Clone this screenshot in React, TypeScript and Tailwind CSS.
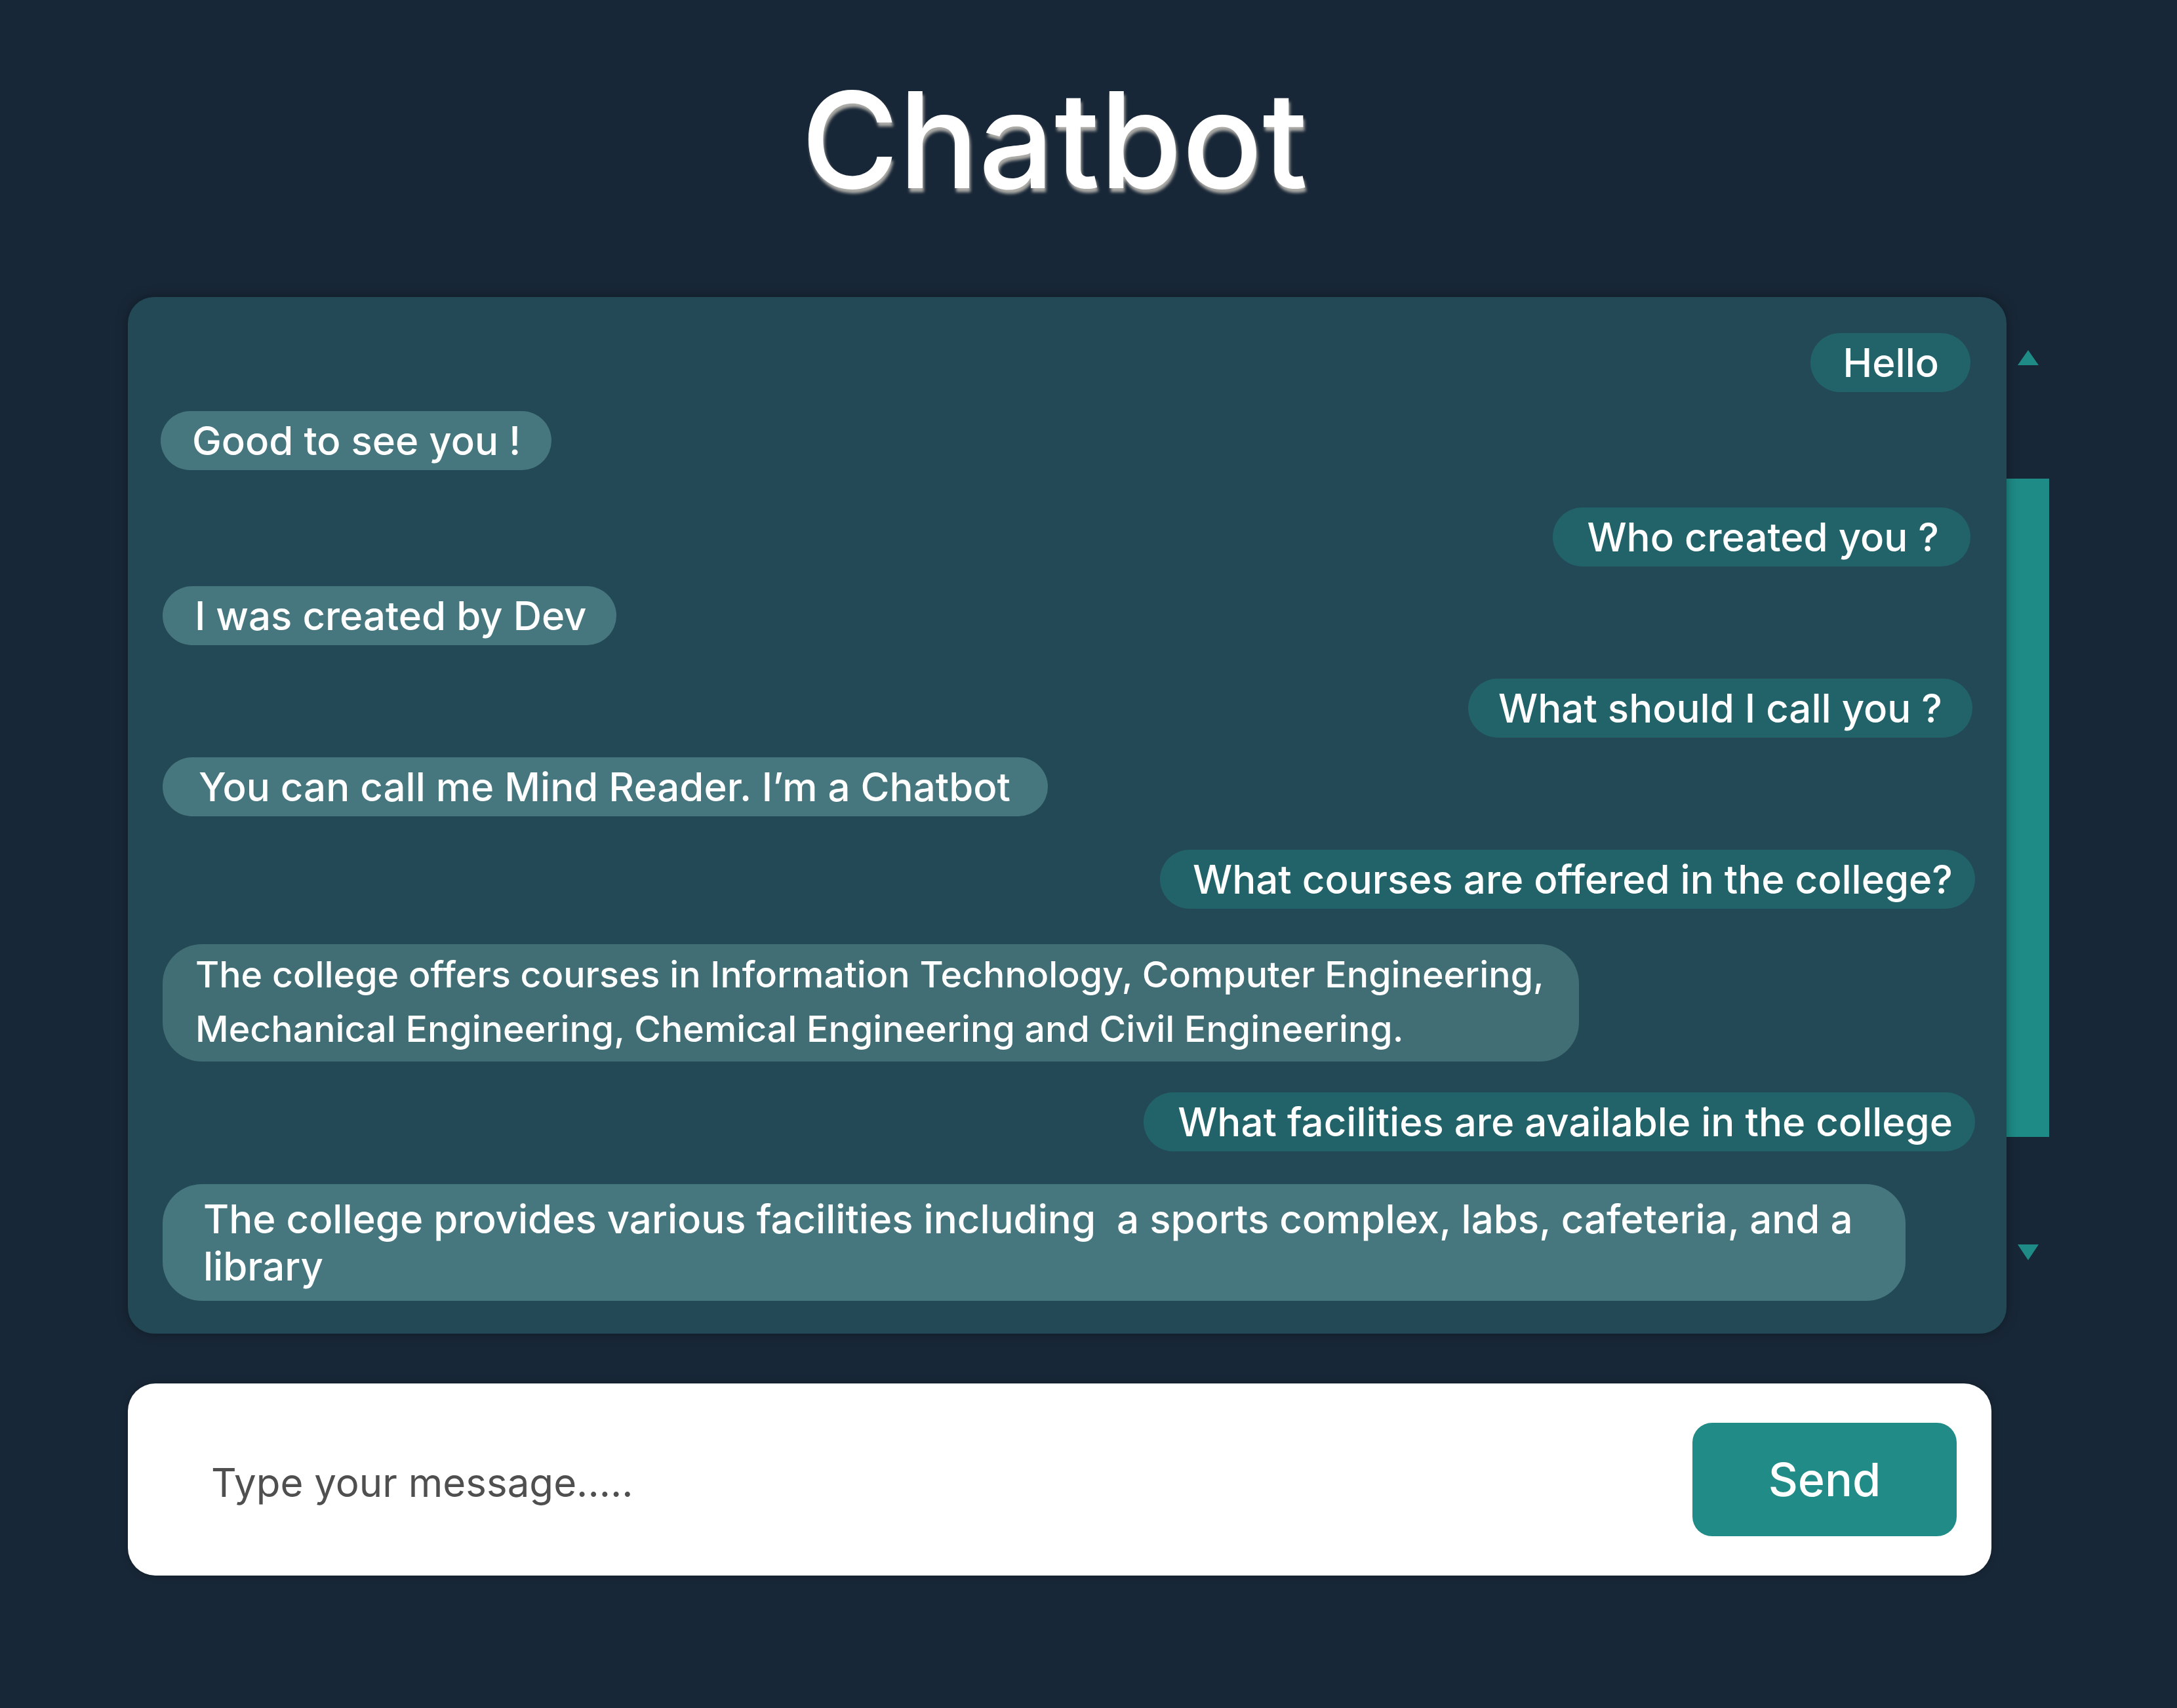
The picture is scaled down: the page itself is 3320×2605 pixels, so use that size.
import React, { useState } from 'react'

type Msg = {
  from: 'user' | 'bot'
  text: string
  cls: string
}

const messages: Msg[] = [
  { from: 'user', text: 'Hello', cls: 'mr-[55px] pl-[50px] pr-[48px]' },
  { from: 'bot', text: 'Good to see you !', cls: 'mt-[29px] ml-[50px] pl-[48px] pr-[47px]' },
  { from: 'user', text: 'Who created you ?', cls: 'mt-[57px] mr-[55px] pl-[52px] pr-[48px]' },
  { from: 'bot', text: 'I was created by Dev', cls: 'mt-[30px] ml-[53px] pl-[49px] pr-[45px]' },
  { from: 'user', text: 'What should I call you ?', cls: 'mt-[51px] mr-[52px] pl-[46px] pr-[46px]' },
  { from: 'bot', text: 'You can call me Mind Reader. I\u2019m a Chatbot', cls: 'mt-[30px] ml-[53px] pl-[55px] pr-[57px]' },
  { from: 'user', text: 'What courses are offered in the college?', cls: 'mt-[51px] mr-[48px] pl-[50px] pr-[34px]' },
]

const Bubble = ({ msg }: { msg: Msg }) => (
  <div
    className={
      msg.from === 'user'
        ? `self-end rounded-[60px] bg-[#226369] text-[60px] leading-[90px] font-medium text-white whitespace-nowrap ${msg.cls}`
        : `self-start rounded-[60px] bg-[#47777e] text-[60px] leading-[90px] font-medium text-white whitespace-nowrap ${msg.cls}`
    }
  >
    {msg.text}
  </div>
)

export default function App() {
  const [input, setInput] = useState('')

  return (
    <div className="min-h-screen bg-[#182737] font-['Inter',sans-serif]">
      <div className="mx-auto w-[2930px] pt-[112px]">
        <h1 className="w-[2826px] text-center text-[203px] leading-none font-medium text-white [text-shadow:2px_6px_4px_rgba(190,186,180,0.9)]">
          Chatbot
        </h1>

        <div className="mt-[138px] flex">
          <div className="relative z-10 flex w-[2865px] flex-col rounded-[40px] bg-[#244956] pt-[55px] pb-[50px] shadow-[0_0_18px_rgba(0,0,0,0.35)]">
            {messages.map((m, i) => (
              <Bubble key={i} msg={m} />
            ))}
            <div className="mt-[54px] ml-[53px] max-w-[2160px] self-start rounded-[60px] bg-[#416e75] pt-[5px] pb-[9px] pl-[50px] pr-[40px] text-[55.5px] leading-[82.5px] font-medium text-white">
              The college offers courses in Information Technology, Computer Engineering, Mechanical Engineering,
              Chemical Engineering and Civil Engineering.
            </div>
            <div className="mt-[47px] mr-[48px] self-end rounded-[60px] bg-[#226369] pl-[52px] pr-[34px] text-[60px] leading-[90px] font-medium whitespace-nowrap text-white">
              What facilities are available in the college
            </div>
            <div className="mt-[50px] ml-[53px] max-w-[2658px] self-start rounded-[60px] bg-[#47777e] py-[17px] pl-[62px] pr-[36px] text-[60px] leading-[72px] font-medium text-white">
              The college provides various facilities including{'\u00a0'} a sports complex, labs, cafeteria, and a library
            </div>
          </div>

          {/* scrollbar */}
          <div className="flex w-[65px] flex-col items-center pt-[81px]">
            <svg width="32" height="23" viewBox="0 0 32 23" className="ml-[1px]">
              <polygon points="16,0 32,23 0,23" fill="#1f8b87" />
            </svg>
            <div className="mt-[173px] h-[1004px] w-full bg-[#1f8b87]" />
            <svg width="32" height="24" viewBox="0 0 32 24" className="mt-[164px] ml-[1px]">
              <polygon points="0,0 32,0 16,24" fill="#1f8b87" />
            </svg>
          </div>
        </div>

        <div className="mt-[76px] flex h-[293px] w-[2842px] items-center rounded-[42px] bg-white pl-[127px] pr-[53px] shadow-[0_0_12px_rgba(0,0,0,0.25)]">
          <input
            type="text"
            value={input}
            onChange={(e) => setInput(e.target.value)}
            placeholder="Type your message....."
            className="mt-[8px] min-w-0 flex-1 bg-transparent text-[60px] text-[#333] outline-none placeholder:text-[#4f4f4f]"
          />
          <button
            type="button"
            className="h-[173px] w-[403px] rounded-[30px] bg-[#218c87] text-[70px] font-medium text-white"
          >
            Send
          </button>
        </div>
      </div>
    </div>
  )
}
